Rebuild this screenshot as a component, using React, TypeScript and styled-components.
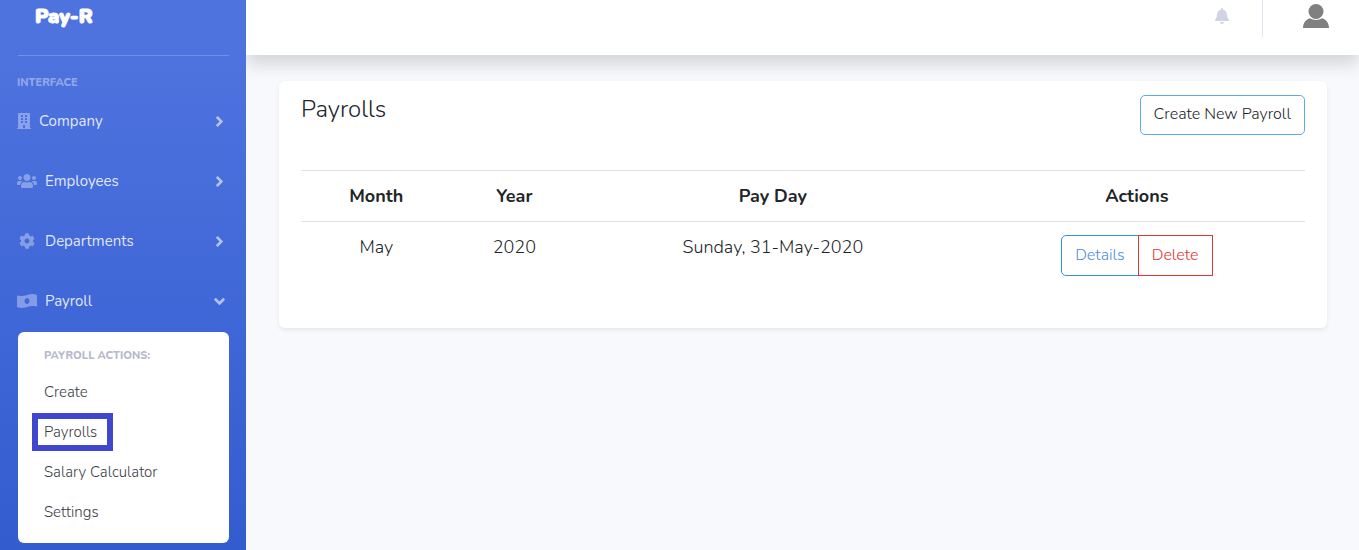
import React from "react";
import styled, { createGlobalStyle } from "styled-components";
import { FaBuilding, FaUsers, FaCog, FaBell, FaAngleRight, FaAngleDown } from "react-icons/fa";

const GlobalStyle = createGlobalStyle`
  *, *::before, *::after { box-sizing: border-box; }
  body {
    margin: 0;
    background: #f8f9fc;
    color: #212529;
    font-family: Nunito, "Open Sans", "Liberation Sans", sans-serif;
    font-size: 16px;
    line-height: 24px;
    font-weight: 300;
  }
  a { color: inherit; text-decoration: none; }
  button { font: inherit; cursor: pointer; }
`;

const Shell = styled.div`
  display: flex;
  min-height: 100vh;
`;

const Sidebar = styled.nav`
  position: relative;
  z-index: 1;
  flex: 0 0 246px;
  display: flex;
  flex-direction: column;
  padding: 0 17px 7px;
  background: linear-gradient(180deg, #4e73df 10%, #335ccf 100%);
  color: #fff;
`;

const Brand = styled.a`
  height: 56px;
  margin-left: 1px;
  padding: 4px 0 0 17px;
  border-bottom: 1px solid rgba(255, 255, 255, 0.2);
  font-weight: 900;
  font-size: 20px;
  line-height: 26px;
  -webkit-text-stroke: 1px #fff;
`;

const GroupTitle = styled.div`
  padding-top: 19px;
  color: rgba(255, 255, 255, 0.4);
  font-size: 11px;
  line-height: 16px;
  font-weight: 800;
  text-transform: uppercase;
`;

const SubmenuTitle = styled(GroupTitle)`
  padding: 0 26px 8px;
  color: #b7b9cc;
`;

const NavButton = styled.button`
  display: flex;
  align-items: center;
  width: 100%;
  height: 60px;
  padding: 0 1px 0 0;
  border: 0;
  background: none;
  color: rgba(255, 255, 255, 0.85);
  font-size: 15px;
  font-weight: 400;
  text-align: left;
`;

const NavIcon = styled.span<{ $width: number; $height: number }>`
  display: flex;
  color: rgba(255, 255, 255, 0.35);

  svg {
    width: ${(p) => p.$width}px;
    height: ${(p) => p.$height}px;
  }
`;

const NavArrow = styled.span`
  display: flex;
  color: rgba(255, 255, 255, 0.6);
`;

const NavLabel = styled.span`
  flex: 1;
  padding-left: 8px;
`;

const NavList = styled.div`
  display: flex;
  flex-direction: column;
  padding-bottom: 1px;
`;

const Submenu = styled.div`
  margin-left: 1px;
  padding: 16px 0 11px;
  border-radius: 6px;
  background: #fff;
  color: #3a3b45;
  font-size: 15px;
`;

const SubmenuLink = styled.a`
  display: flex;
  align-items: center;
  height: 40px;
  padding-left: 20px;
`;

const SubmenuLabel = styled.span<{ $marked?: boolean }>`
  padding: 1px 10px 1px 6px;
  outline: ${(p) => (p.$marked ? "6px solid #3f48cc" : "none")};
`;

const Content = styled.div`
  flex: 1;
  min-width: 0;
`;

const Topbar = styled.header`
  display: flex;
  justify-content: flex-end;
  height: 55px;
  padding-right: 30px;
  background: #fff;
  box-shadow: 0 9px 18px rgba(0, 0, 0, 0.15);
`;

const IconButton = styled.button`
  display: flex;
  align-items: center;
  height: 32px;
  padding: 0;
  border: 0;
  background: none;
  color: #d1d3e2;
`;

const Separator = styled.div`
  width: 1px;
  height: 37px;
  margin: 0 40px 0 32px;
  background: #e3e6f0;
`;

const Card = styled.main`
  margin: 26px 32px 0 33px;
  padding: 14px 22px 39px;
  border-radius: 6px;
  background: #fff;
  box-shadow: 0 2px 4px rgba(0, 0, 0, 0.075);
`;

const CardHeader = styled.div`
  display: flex;
  justify-content: space-between;
  align-items: flex-start;
  margin-bottom: 35px;
`;

const Title = styled.h1`
  margin: 0;
  font-size: 24px;
  line-height: 28px;
  font-weight: 300;
`;

const OutlineButton = styled.button<{ $tone: string; $ink: string; $round: string }>`
  height: 40px;
  padding: 0 13px 2px;
  border: 1px solid ${(p) => p.$tone};
  border-radius: ${(p) => p.$round};
  background: #fff;
  color: ${(p) => p.$ink};
`;

const ButtonGroup = styled.div`
  display: inline-flex;
  vertical-align: top;
  font-size: 16px;

  button { height: 41px; }
  button + button { margin-left: -1px; }
`;

const Table = styled.table`
  width: 100%;
  border-collapse: collapse;
  table-layout: fixed;
  font-size: 18px;
  text-align: center;

  th, td {
    padding: 13px;
    border-top: 1px solid #dee2e6;
    vertical-align: top;
  }
  th { font-weight: 700; }
`;

const Column = styled.col<{ $share: string }>`
  width: ${(p) => p.$share};
`;

const Banknote = () => (
  <svg viewBox="0 0 640 512" fill="currentColor">
    <path
      fillRule="evenodd"
      d="M621.160 54.460C582.370 38.190 543.550 32 504.750 32c-123.170-.01-246.330 62.340-369.500 62.340-30.890 0-61.760-3.920-92.650-13.720-3.470-1.100-6.950-1.620-10.350-1.620C15.040 79 0 92.320 0 110.810v317.260c0 12.630 7.230 24.600 18.840 29.460C57.630 473.810 96.450 480 135.250 480c123.170 0 246.340-62.350 369.510-62.350 30.890 0 61.760 3.920 92.650 13.720 3.470 1.100 6.950 1.620 10.350 1.620 17.210 0 32.250-13.320 32.250-31.810V83.930c-.01-12.640-7.240-24.600-18.850-29.470zM320 352c-44.200 0-80-42.990-80-96 0-53.020 35.820-96 80-96s80 42.980 80 96c0 53.030-35.830 96-80 96z"
    />
  </svg>
);

const menu: { label: string; Icon: React.ComponentType; width: number; height: number; open?: boolean }[] = [
  { label: "Company", Icon: FaBuilding, width: 14, height: 16 },
  { label: "Employees", Icon: FaUsers, width: 20, height: 16 },
  { label: "Departments", Icon: FaCog, width: 20, height: 16 },
  { label: "Payroll", Icon: Banknote, width: 20, height: 16, open: true },
];

const actions = ["Create", "Payrolls", "Salary Calculator", "Settings"];

export default function App() {
  return (
    <>
      <GlobalStyle />
      <Shell>
        <Sidebar>
          <Brand href="#">Pay-R</Brand>
          <GroupTitle>Interface</GroupTitle>
          <NavList>
            {menu.map(({ label, Icon, width, height, open }) => (
              <NavButton key={label} aria-expanded={!!open}>
                <NavIcon $width={width} $height={height}><Icon /></NavIcon>
                <NavLabel>{label}</NavLabel>
                <NavArrow>{open ? <FaAngleDown size={17} /> : <FaAngleRight size={17} />}</NavArrow>
              </NavButton>
            ))}
          </NavList>
          <Submenu>
            <SubmenuTitle>Payroll Actions:</SubmenuTitle>
            {actions.map((a) => (
              <SubmenuLink href="#" key={a}>
                <SubmenuLabel $marked={a === "Payrolls"}>{a}</SubmenuLabel>
              </SubmenuLink>
            ))}
          </Submenu>
        </Sidebar>
        <Content>
          <Topbar>
            <IconButton aria-label="Notifications"><FaBell size={16} /></IconButton>
            <Separator />
            <IconButton aria-label="Account">
              <svg width="26" height="24" viewBox="0 0 26 24" fill="#808080">
                <circle cx="13" cy="7.5" r="7.5" />
                <path d="M0 24c0-5 3-9 7-9.800 3.500 2.300 8.500 2.300 12 0 4 .8 7 4.800 7 9.800z" />
              </svg>
            </IconButton>
          </Topbar>
          <Card>
            <CardHeader>
              <Title>Payrolls</Title>
              <OutlineButton $tone="#5dade2" $ink="#212529" $round="5px">Create New Payroll</OutlineButton>
            </CardHeader>
            <Table>
              <colgroup>
                <Column $share="15%" />
                <Column $share="12.5%" />
                <Column $share="39%" />
                <Column $share="33.5%" />
              </colgroup>
              <thead>
                <tr><th>Month</th><th>Year</th><th>Pay Day</th><th>Actions</th></tr>
              </thead>
              <tbody>
                <tr>
                  <td>May</td>
                  <td>2020</td>
                  <td>Sunday, 31-May-2020</td>
                  <td>
                    <ButtonGroup>
                      <OutlineButton $tone="#3490dc" $ink="#4a8fdf" $round="5px 0 0 5px">Details</OutlineButton>
                      <OutlineButton $tone="#e3342f" $ink="#e3342f" $round="0">Delete</OutlineButton>
                    </ButtonGroup>
                  </td>
                </tr>
              </tbody>
            </Table>
          </Card>
        </Content>
      </Shell>
    </>
  );
}
